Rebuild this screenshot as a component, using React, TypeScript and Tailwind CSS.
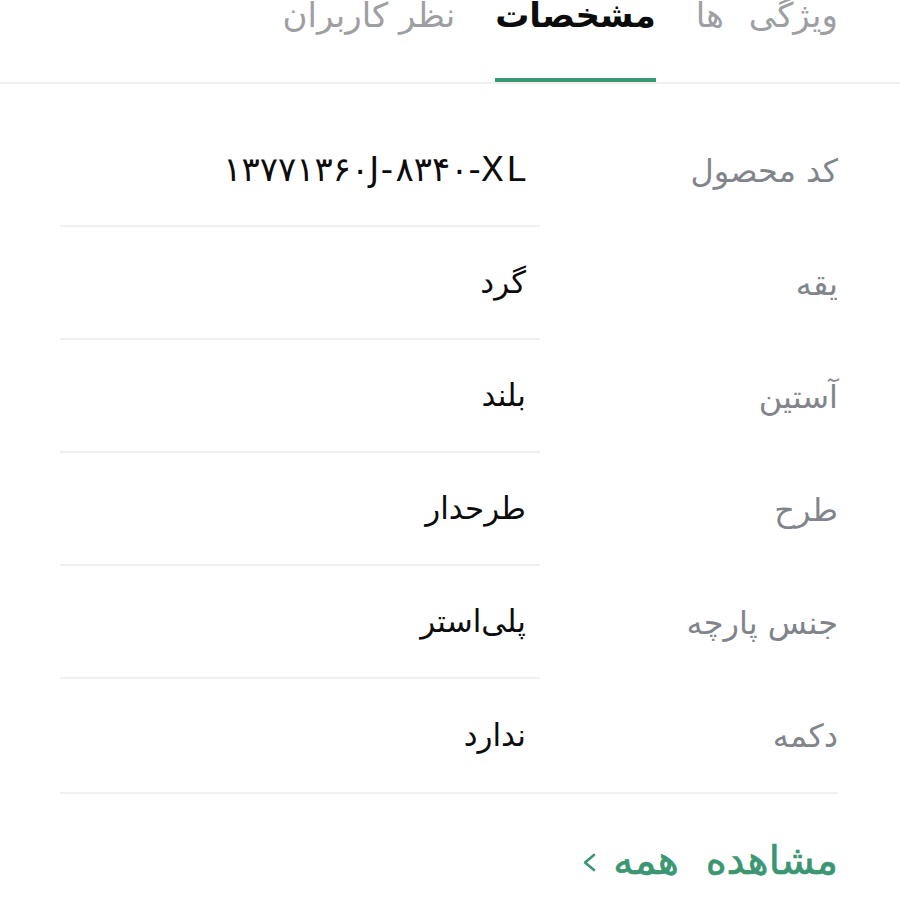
const SPECS = [
  { label: 'کد محصول', value: '۱۳۷۷۱۳۶۰J-۸۳۴۰-XL', ltr: true },
  { label: 'یقه', value: 'گرد' },
  { label: 'آستین', value: 'بلند' },
  { label: 'طرح', value: 'طرحدار' },
  { label: 'جنس پارچه', value: 'پلی‌استر' },
  { label: 'دکمه', value: 'ندارد' },
]

const TABS = [
  { label: 'ویژگی ها', active: false, wide: true },
  { label: 'مشخصات', active: true, wide: false },
  { label: 'نظر کاربران', active: false, wide: false },
]

export default function App() {
  return (
    <div dir="rtl" className="w-[900px] h-[900px] bg-white overflow-hidden font-['DejaVu_Sans',sans-serif]">
      {/* Tabs */}
      <div className="h-[84px] border-b-2 border-[#f0f0f1] flex items-end gap-[40px] px-[62px]">
        {TABS.map((tab) => (
          <div
            key={tab.label}
            className={
              tab.active
                ? 'shrink-0 pb-[43px] border-b-4 border-[#3b9672] text-[34px] leading-[40px] font-bold text-[#0c0c0c]'
                : tab.wide
                  ? 'shrink-0 pb-[47px] text-[34px] leading-[40px] text-[#9e9fa3] [word-spacing:14px]'
                  : 'shrink-0 pb-[47px] text-[34px] leading-[40px] text-[#9e9fa3]'
            }
          >
            {tab.label}
          </div>
        ))}
      </div>

      {/* Spec rows */}
      <div className="mt-[30px] mr-[62px] ml-[60px] border-b-2 border-[#f0f0f1]">
        {SPECS.map((row, i) => (
          <div key={row.label} className="flex h-[113px]">
            <div className="w-[298px] flex items-center text-[32px] text-[#81858b]">{row.label}</div>
            <div
              className={
                i < SPECS.length - 1
                  ? 'flex-1 flex items-center pr-[14px] border-b-2 border-[#f0f0f1] text-[31px] text-[#0c0c0c]'
                  : 'flex-1 flex items-center pr-[14px] text-[31px] text-[#0c0c0c]'
              }
            >
              {row.ltr ? (
                <span dir="ltr" className="text-[34px] tracking-[2.5px] -mr-[2px]">{row.value}</span>
              ) : (
                row.value
              )}
            </div>
          </div>
        ))}
      </div>

      {/* See all */}
      <div className="mx-[62px] mt-[44px] flex items-center gap-[16px] text-[40px] leading-[44px] text-[#3b9672] [-webkit-text-stroke:0.7px_#3b9672]">
        <span className="[word-spacing:14px]">مشاهده همه</span>
        <svg width="15" height="19" viewBox="0 0 15 19" fill="none" className="mt-[4px]">
          <polyline points="12,2 3,9.5 12,17" stroke="currentColor" strokeWidth="2.6" strokeLinecap="round" strokeLinejoin="round" />
        </svg>
      </div>
    </div>
  )
}
